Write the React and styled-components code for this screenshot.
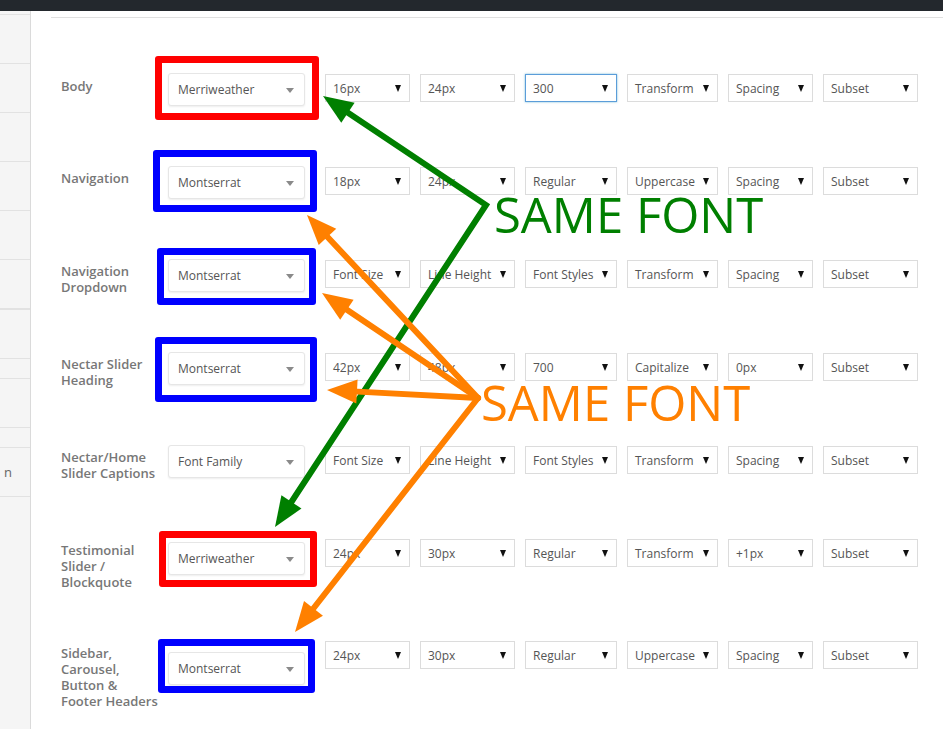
import React from "react";
import styled, { createGlobalStyle } from "styled-components";

const GlobalStyle = createGlobalStyle`
  html, body {
    margin: 0;
    padding: 0;
    background: #fff;
  }
  body {
    font-family: "Open Sans", "Noto Sans", sans-serif;
  }
`;

// h = row height, lo = label offset, so = small select offset (both from the top of the family select)
const rows = [
  {
    label: ["Body"],
    h: 93,
    lo: 5,
    so: 1,
    family: "Merriweather",
    mark: { color: "#ff0000", t: 17, r: 14, b: 14, l: 13 },
    fields: ["16px", "24px", "300", "Transform", "Spacing", "Subset"],
    focus: 2,
  },
  {
    label: ["Navigation"],
    h: 93,
    lo: 4,
    so: 1,
    family: "Montserrat",
    mark: { color: "#0000ff", t: 16, r: 12, b: 13, l: 15 },
    fields: ["18px", "24px", "Regular", "Uppercase", "Spacing", "Subset"],
  },
  {
    label: ["Navigation", "Dropdown"],
    h: 93,
    lo: 4,
    so: 1,
    family: "Montserrat",
    mark: { color: "#0000ff", t: 11, r: 11, b: 13, l: 11 },
    fields: ["Font Size", "Line Height", "Font Styles", "Transform", "Spacing", "Subset"],
  },
  {
    label: ["Nectar Slider", "Heading"],
    h: 93,
    lo: 4,
    so: 1,
    family: "Montserrat",
    mark: { color: "#0000ff", t: 15, r: 12, b: 17, l: 13 },
    fields: ["42px", "48px", "700", "Capitalize", "0px", "Subset"],
  },
  {
    label: ["Nectar/Home", "Slider Captions"],
    h: 97,
    lo: 4,
    so: 1,
    family: "Font Family",
    fields: ["Font Size", "Line Height", "Font Styles", "Transform", "Spacing", "Subset"],
  },
  {
    label: ["Testimonial", "Slider /", "Blockquote"],
    h: 110,
    lo: 0,
    so: -3,
    family: "Merriweather",
    mark: { color: "#ff0000", t: 11, r: 12, b: 12, l: 9 },
    fields: ["24px", "30px", "Regular", "Transform", "+1px", "Subset"],
  },
  {
    label: ["Sidebar,", "Carousel,", "Button &", "Footer Headers"],
    h: 107,
    lo: -7,
    so: -11,
    family: "Montserrat",
    mark: { color: "#0000ff", t: 13, r: 10, b: 8, l: 10 },
    fields: ["24px", "30px", "Regular", "Uppercase", "Spacing", "Subset"],
  },
];

const fieldWidths = [85, 95, 92, 91, 85, 95];

// sidebar menu item heights (between the divider lines)
const sideItems = [
  { h: 48 }, { h: 48 }, { h: 48 }, { h: 48 }, { h: 48 }, { h: 48 },
  { h: 48, thick: true }, { h: 19 }, { h: 48 }, { h: 19 }, { h: 48, text: "n" },
];

const Page = styled.div`
  position: relative;
  min-height: 100vh;
  display: flex;
  flex-direction: column;
  overflow: hidden;
`;

const TopBar = styled.div`
  height: 11px;
  background: #23282d;
  flex-shrink: 0;
`;

const Body = styled.div`
  flex: 1;
  display: flex;
`;

const Sidebar = styled.div`
  width: 30px;
  flex-shrink: 0;
  padding-top: 3px;
  background: #f5f5f5;
  border-right: 1px solid #dadada;
`;

const SideItem = styled.div`
  height: ${(p) => p.$h}px;
  border-top: ${(p) => (p.$thick ? "2px" : "1px")} solid #e2e2e2;
  display: flex;
  align-items: center;
  padding-left: 4px;
  font-size: 13px;
  color: #666;
  &:last-child {
    border-bottom: 1px solid #e2e2e2;
  }
`;

const Main = styled.div`
  flex: 1;
  padding: 6px 0 0 20px;
`;

const Table = styled.div`
  border-top: 1px solid #e0e0e0;
  padding-top: 25px;
`;

const Row = styled.div`
  box-sizing: border-box;
  height: ${(p) => p.$h}px;
  display: flex;
  align-items: flex-start;
  padding: 30px 0 0 10px;
`;

const Label = styled.div`
  width: 107px;
  flex-shrink: 0;
  margin-top: ${(p) => p.$offset}px;
  font-size: 13px;
  line-height: 16px;
  font-weight: 600;
  color: #777;
  span {
    display: block;
    white-space: nowrap;
  }
`;

const Fields = styled.div`
  display: flex;
  align-items: flex-start;
`;

const FamilyWrap = styled.div`
  position: relative;
  width: 137px;
  height: 33px;
  margin-right: 20px;
  flex-shrink: 0;
`;

const FamilySelect = styled.div`
  box-sizing: border-box;
  height: 100%;
  display: flex;
  align-items: center;
  justify-content: space-between;
  padding: 0 10px 0 9px;
  background: #fff;
  border: 1px solid #e6e6e6;
  border-radius: 3px;
  box-shadow: 0 1px 2px rgba(0, 0, 0, 0.07);
  font-size: 12px;
  color: #555;
`;

const GreyCaret = styled.span`
  width: 0;
  height: 0;
  border-left: 4px solid transparent;
  border-right: 4px solid transparent;
  border-top: 5px solid #8a8a8a;
  margin-top: 1px;
`;

const Highlight = styled.div`
  position: absolute;
  top: -${(p) => p.$t}px;
  right: -${(p) => p.$r}px;
  bottom: -${(p) => p.$b}px;
  left: -${(p) => p.$l}px;
  border: 7px solid ${(p) => p.$color};
  border-radius: 3px;
  pointer-events: none;
`;

const SmallSelect = styled.div`
  box-sizing: border-box;
  width: ${(p) => p.$w}px;
  height: 28px;
  margin-top: ${(p) => p.$offset}px;
  margin-right: 10px;
  flex-shrink: 0;
  display: flex;
  align-items: center;
  justify-content: space-between;
  padding: 0 8px 0 7px;
  background: #fff;
  border: 1px solid ${(p) => (p.$focus ? "#5b9dd9" : "#dcdcdc")};
  box-shadow: ${(p) => (p.$focus ? "0 0 2px rgba(30, 140, 190, 0.6)" : "none")};
  font-size: 12px;
  color: #555;
  white-space: nowrap;
  &:last-child {
    margin-right: 0;
  }
`;

const BlackCaret = styled.span`
  width: 0;
  height: 0;
  border-left: 3.5px solid transparent;
  border-right: 3.5px solid transparent;
  border-top: 7px solid #111;
  flex-shrink: 0;
`;

const Overlay = styled.svg`
  position: absolute;
  top: 0;
  left: 0;
  pointer-events: none;
`;

const Callout = styled.div`
  position: absolute;
  left: ${(p) => p.$x}px;
  top: ${(p) => p.$y}px;
  font-family: "Open Sans", "Noto Sans", sans-serif;
  font-size: 49px;
  line-height: 1;
  color: ${(p) => p.$color};
  white-space: nowrap;
  pointer-events: none;
`;

const GREEN = "#007f00";
const ORANGE = "#ff8000";

function head(fx, fy, tx, ty, len = 30, hw = 12) {
  const dx = tx - fx;
  const dy = ty - fy;
  const d = Math.hypot(dx, dy);
  const ux = dx / d;
  const uy = dy / d;
  const bx = tx - ux * len;
  const by = ty - uy * len;
  const px = -uy;
  const py = ux;
  return {
    points: `${tx},${ty} ${bx + px * hw},${by + py * hw} ${bx - px * hw},${by - py * hw}`,
    end: [tx - ux * (len - 4), ty - uy * (len - 4)],
  };
}

function Arrows() {
  const v = [486, 205];
  const a = head(v[0], v[1], 323, 96);
  const b = head(v[0], v[1], 275, 527);
  const o = [478, 398];
  const targets = [
    [307, 215],
    [322, 293],
    [327, 390],
    [295, 632],
  ];
  return (
    <Overlay width="943" height="729" viewBox="0 0 943 729">
      <path
        d={`M${a.end[0]},${a.end[1]} L${v[0]},${v[1]} L${b.end[0]},${b.end[1]}`}
        fill="none"
        stroke={GREEN}
        strokeWidth="6"
        strokeLinejoin="miter"
      />
      <polygon points={a.points} fill={GREEN} />
      <polygon points={b.points} fill={GREEN} />
      {targets.map(([x, y], i) => {
        const h = head(o[0], o[1], x, y);
        return (
          <g key={i}>
            <line
              x1={o[0]}
              y1={o[1]}
              x2={h.end[0]}
              y2={h.end[1]}
              stroke={ORANGE}
              strokeWidth="6"
              strokeLinecap="round"
            />
            <polygon points={h.points} fill={ORANGE} />
          </g>
        );
      })}
    </Overlay>
  );
}

export default function App() {
  return (
    <>
      <GlobalStyle />
      <Page>
        <TopBar />
        <Body>
          <Sidebar>
            {sideItems.map((item, i) => (
              <SideItem key={i} $h={item.h} $thick={item.thick}>
                {item.text}
              </SideItem>
            ))}
          </Sidebar>
          <Main>
            <Table>
              {rows.map((row, i) => (
                <Row key={i} $h={row.h}>
                  <Label $offset={row.lo}>
                    {row.label.map((line) => (
                      <span key={line}>{line}</span>
                    ))}
                  </Label>
                  <Fields>
                    <FamilyWrap>
                      <FamilySelect>
                        {row.family}
                        <GreyCaret />
                      </FamilySelect>
                      {row.mark && (
                        <Highlight
                          $color={row.mark.color}
                          $t={row.mark.t}
                          $r={row.mark.r}
                          $b={row.mark.b}
                          $l={row.mark.l}
                        />
                      )}
                    </FamilyWrap>
                    {row.fields.map((f, j) => (
                      <SmallSelect
                        key={j}
                        $w={fieldWidths[j]}
                        $offset={row.so}
                        $focus={row.focus === j}
                      >
                        {f}
                        <BlackCaret />
                      </SmallSelect>
                    ))}
                  </Fields>
                </Row>
              ))}
            </Table>
          </Main>
        </Body>
        <Arrows />
        <Callout $x={494} $y={190} $color={GREEN}>
          SAME FONT
        </Callout>
        <Callout $x={481} $y={378} $color={ORANGE}>
          SAME FONT
        </Callout>
      </Page>
    </>
  );
}
